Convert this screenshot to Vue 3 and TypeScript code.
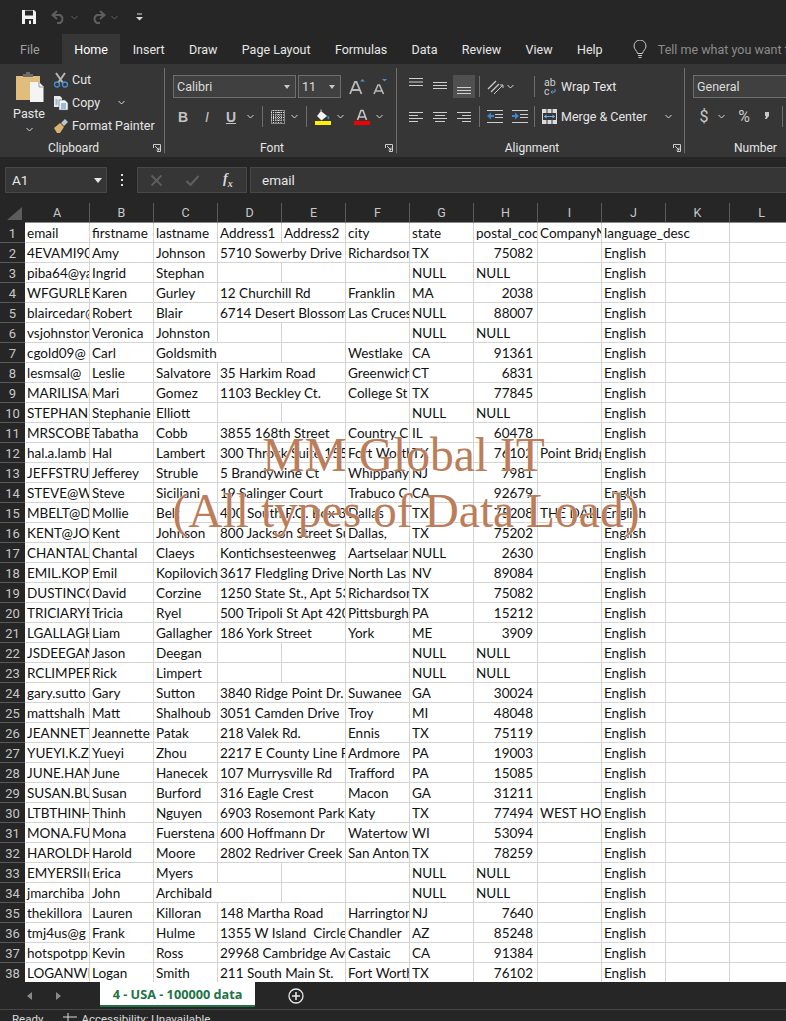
<script setup lang="ts">
// Excel dark ribbon with a worksheet of imported contacts

const tabs = ["File", "Home", "Insert", "Draw", "Page Layout", "Formulas", "Data", "Review", "View", "Help"];
const columns = ["A", "B", "C", "D", "E", "F", "G", "H", "I", "J", "K", "L"];

const raw = `email|firstname|lastname|Address1|Address2|city|state|postal_code|CompanyName|language_desc
4EVAMI90@|Amy|Johnson|5710 Sowerby Drive||Richardson|TX|75082||English
piba64@yahoo|Ingrid|Stephan||||NULL|NULL||English
WFGURLEY@|Karen|Gurley|12 Churchill Rd||Franklin|MA|2038||English
blaircedar@|Robert|Blair|6714 Desert Blossom||Las Cruces|NULL|88007||English
vsjohnston|Veronica|Johnston||||NULL|NULL||English
cgold09@|Carl|Goldsmith|||Westlake|CA|91361||English
lesmsal@|Leslie|Salvatore|35 Harkim Road||Greenwich|CT|6831||English
MARILISA@|Mari|Gomez|1103 Beckley Ct.||College St|TX|77845||English
STEPHANI|Stephanie|Elliott||||NULL|NULL||English
MRSCOBB|Tabatha|Cobb|3855 168th Street||Country C|IL|60478||English
hal.a.lamb|Hal|Lambert|300 Throck Suite 1551||Fort Worth|TX|76102|Point Bridge|English
JEFFSTRUBLE|Jefferey|Struble|5 Brandywine Ct||Whippany|NJ|7981||English
STEVE@W|Steve|Siciliani|19 Salinger Court||Trabuco C|CA|92679||English
MBELT@D|Mollie|Belt|400 South P.O. Box 3||Dallas|TX|75208|THE DALLAS|English
KENT@JO|Kent|Johnson|800 Jackson Street Su||Dallas,|TX|75202||English
CHANTAL.|Chantal|Claeys|Kontichsesteenweg||Aartselaar|NULL|2630||English
EMIL.KOPI|Emil|Kopilovich|3617 Fledgling Drive||North Las|NV|89084||English
DUSTINCO|David|Corzine|1250 State St., Apt 53||Richardson|TX|75082||English
TRICIARYE|Tricia|Ryel|500 Tripoli St Apt 420||Pittsburgh|PA|15212||English
LGALLAGH|Liam|Gallagher|186 York Street||York|ME|3909||English
JSDEEGAN|Jason|Deegan||||NULL|NULL||English
RCLIMPER|Rick|Limpert||||NULL|NULL||English
gary.sutto|Gary|Sutton|3840 Ridge Point Dr.||Suwanee|GA|30024||English
mattshalh|Matt|Shalhoub|3051 Camden Drive||Troy|MI|48048||English
JEANNETT|Jeannette|Patak|218 Valek Rd.||Ennis|TX|75119||English
YUEYI.K.ZH|Yueyi|Zhou|2217 E County Line R||Ardmore|PA|19003||English
JUNE.HAN|June|Hanecek|107 Murrysville Rd||Trafford|PA|15085||English
SUSAN.BU|Susan|Burford|316 Eagle Crest||Macon|GA|31211||English
LTBTHINH|Thinh|Nguyen|6903 Rosemont Park||Katy|TX|77494|WEST HOU|English
MONA.FU|Mona|Fuerstena|600 Hoffmann Dr||Watertow|WI|53094||English
HAROLDH|Harold|Moore|2802 Redriver Creek||San Anton|TX|78259||English
EMYERSII@|Erica|Myers||||NULL|NULL||English
jmarchiba|John|Archibald||||NULL|NULL||English
thekillora|Lauren|Killoran|148 Martha Road||Harrington|NJ|7640||English
tmj4us@g|Frank|Hulme|1355 W Island  Circle||Chandler|AZ|85248||English
hotspotpp|Kevin|Ross|29968 Cambridge Av||Castaic|CA|91384||English
LOGANWH|Logan|Smith|211 South Main St.||Fort Worth|TX|76102||English`;

interface Cell {
  text: string;
  span: number;
  isNumber: boolean;
}

// a long text runs over into an empty neighbour, like in a real sheet
function buildRow(line: string, rowIndex: number): Cell[] {
  const parts = line.split("|");
  while (parts.length < 12) parts.push("");
  const cells: Cell[] = [];
  for (let i = 0; i < 12; i++) {
    const text = parts[i];
    let span = 1;
    if (text && i < 11 && parts[i + 1] === "" && text.length > 8) span = 2;
    cells.push({ text, span, isNumber: rowIndex > 0 && /^\d+$/.test(text) });
    if (span === 2) i++;
  }
  return cells;
}

const rows = raw.split("\n").map(buildRow);
</script>

<template>
  <div class="excel">
    <div class="qat">
      <svg class="save" width="16" height="16" viewBox="0 0 16 16">
        <path d="M1 1h12l2 2v12H1z" fill="#f2f2f2" />
        <rect x="4" y="1.5" width="8" height="5" fill="#262626" />
        <rect x="4" y="10" width="8" height="5" fill="#262626" />
        <rect x="8" y="11.5" width="2" height="3.5" fill="#f2f2f2" />
      </svg>
      <svg class="qat-undo" width="15" height="14" viewBox="0 0 15 14">
        <path d="M6 1 1.500 5 6 9M2 5h7a4.500 4.500 0 0 1 0 8H6" fill="none" stroke="#5e5e5e" stroke-width="2" />
      </svg>
      <svg class="qat-chev" width="7" height="5" viewBox="0 0 7 5"><path d="M.5 1 3.500 4l3-3" fill="none" stroke="#5e5e5e" /></svg>
      <svg class="qat-redo" width="15" height="14" viewBox="0 0 15 14">
        <path d="M9 1l4.500 4L9 9M13 5H6a4.500 4.500 0 0 0 0 8h3" fill="none" stroke="#5e5e5e" stroke-width="2" />
      </svg>
      <svg class="qat-chev" width="7" height="5" viewBox="0 0 7 5"><path d="M.5 1 3.500 4l3-3" fill="none" stroke="#5e5e5e" /></svg>
      <svg class="qat-more" width="7" height="8" viewBox="0 0 7 8">
        <path d="M1 1h5" stroke="#dcdcdc" /><path d="M0 4h7L3.500 7.500z" fill="#dcdcdc" />
      </svg>
    </div>

    <div class="tabs">
      <div v-for="tab in tabs" :key="tab" class="tab" :class="{ active: tab === 'Home', file: tab === 'File' }">{{ tab }}</div>
      <svg class="bulb" width="14" height="19" viewBox="0 0 14 19">
        <path d="M4.500 13.500C4 10.500 1 9.500 1 6a6 6 0 0 1 12 0c0 3.500-3 4.500-3.500 7.500z" fill="none" stroke="#c8c8c8" />
        <path d="M5 15.500h4M5.500 17.500h3" stroke="#c8c8c8" />
      </svg>
      <span class="tell">Tell me what you want to do</span>
    </div>

    <div class="ribbon">
      <section class="group clipboard">
        <div class="group-body">
          <div class="paste">
            <svg width="31" height="31" viewBox="0 0 31 31">
              <path d="M2 4h24v24H2z" fill="#e0bd7c" />
              <path d="M9 4V2h3V0h4v2h3v3H9z" fill="#6b6b6b" />
              <path d="M16 10h9l4.500 4.500V30H16z" fill="#f4f4f4" />
              <path d="M25 10v5h4.500" fill="none" stroke="#9a9a9a" />
            </svg>
            <span class="paste-label">Paste</span>
            <svg class="chev" width="7" height="5" viewBox="0 0 7 5"><path d="M.5 1 3.500 4l3-3" fill="none" stroke="#d8d8d8" /></svg>
          </div>
          <div class="clip-list">
            <div class="clip-row">
              <svg width="16" height="16" viewBox="0 0 16 16">
                <path d="M3 1 10 11M12 1 5 11" stroke="#b8b8b8" stroke-width="2" />
                <circle cx="4" cy="12.500" r="2.500" fill="none" stroke="#4a90d0" stroke-width="1.300" />
                <circle cx="12" cy="12.500" r="2.500" fill="none" stroke="#4a90d0" stroke-width="1.300" />
              </svg>
              <span>Cut</span>
            </div>
            <div class="clip-row">
              <svg width="16" height="16" viewBox="0 0 16 16">
                <path d="M1 1h6l2 2v9H1z" fill="#e8e8e8" />
                <path d="M6 5h6l3 3v7H6z" fill="#f4f4f4" stroke="#5a5a5a" stroke-width=".6" />
                <path d="M8 9h5M8 11h5M8 13h5" stroke="#3f86c8" />
                <path d="M2.500 5h2M2.500 7h2M2.500 9h2" stroke="#3f86c8" />
              </svg>
              <span>Copy</span>
              <svg class="copy-chev" width="7" height="5" viewBox="0 0 7 5"><path d="M.5 1 3.500 4l3-3" fill="none" stroke="#d8d8d8" /></svg>
            </div>
            <div class="clip-row">
              <svg width="16" height="16" viewBox="0 0 16 16">
                <path d="M1 10 7 5l4 4-4 6H4z" fill="#d9b26f" />
                <path d="M8 5l4-4 3 3-4 4z" fill="#c4c4c4" />
              </svg>
              <span>Format Painter</span>
            </div>
          </div>
        </div>
        <div class="group-label">Clipboard
          <svg class="launcher" width="8" height="8" viewBox="0 0 8 8"><path d="M.5 4V.5H7.500V7.500H4M2 2l4 4M6 3.500V6H3.500" fill="none" stroke="#cfcfcf" /></svg>
        </div>
      </section>
      <div class="group-sep"></div>

      <section class="group font">
        <div class="group-body stack">
          <div class="tool-row">
            <div class="combo font-name"><span>Calibri</span><i class="caret"></i></div>
            <div class="combo font-size"><span>11</span><i class="caret"></i></div>
            <svg class="grow" width="17" height="18" viewBox="0 0 17 18">
              <path d="M1 16 6 4h1.500l5 12M3 12h7.500" fill="none" stroke="#b9b9b9" stroke-width="1.800" />
              <path d="M11 3.500 13.500 1 16 3.500z" fill="#4a90d0" />
            </svg>
            <svg class="shrink" width="15" height="18" viewBox="0 0 15 18">
              <path d="M1 16 5 7h1.500l4 9M3 13h6" fill="none" stroke="#b9b9b9" stroke-width="1.600" />
              <path d="M9 1h5l-2.500 2.500z" fill="#4a90d0" />
            </svg>
          </div>
          <div class="tool-row second">
            <b class="fmt bold">B</b>
            <i class="fmt italic">I</i>
            <u class="fmt under">U</u>
            <svg class="chev mini first" width="7" height="5" viewBox="0 0 7 5"><path d="M.5 1 3.500 4l3-3" fill="none" stroke="#d8d8d8" /></svg>
            <div class="tool-sep"></div>
            <svg width="14" height="14" viewBox="0 0 14 14" class="border-icon">
              <rect x=".5" y=".5" width="13" height="13" fill="none" stroke="#dcdcdc" stroke-dasharray="1 1" />
              <path d="M0 2.500h14M0 5h14M0 7.500h14M0 10h14M2.500 0v14M5 0v14M7.500 0v14M10 0v14" stroke="#dcdcdc" stroke-dasharray="1 1" />
            </svg>
            <svg class="chev mini" width="7" height="5" viewBox="0 0 7 5"><path d="M.5 1 3.500 4l3-3" fill="none" stroke="#d8d8d8" /></svg>
            <div class="tool-sep"></div>
            <svg width="16" height="16" viewBox="0 0 16 16" class="fill-icon">
              <path d="M6 2 12 7 6.500 11.500 2 7z" fill="#f2f2f2" />
              <path d="M6 2V.5" stroke="#cfcfcf" />
              <path d="M12.500 6.500a3 3 0 0 1 1.500 4l-1.500-1z" fill="#3f86c8" />
              <rect y="12" width="16" height="4" fill="#ffef00" />
            </svg>
            <svg class="chev mini" width="7" height="5" viewBox="0 0 7 5"><path d="M.5 1 3.500 4l3-3" fill="none" stroke="#d8d8d8" /></svg>
            <svg width="16" height="16" viewBox="0 0 16 16" class="color-icon">
              <path d="M3.500 11 7 1.500h2L12.500 11M5 8h6" fill="none" stroke="#c4c4c4" stroke-width="1.600" />
              <rect y="12" width="16" height="4" fill="#f00000" />
            </svg>
            <svg class="chev mini" width="7" height="5" viewBox="0 0 7 5"><path d="M.5 1 3.500 4l3-3" fill="none" stroke="#d8d8d8" /></svg>
          </div>
        </div>
        <div class="group-label">Font
          <svg class="launcher" width="8" height="8" viewBox="0 0 8 8"><path d="M.5 4V.5H7.500V7.500H4M2 2l4 4M6 3.500V6H3.500" fill="none" stroke="#cfcfcf" /></svg>
        </div>
      </section>
      <div class="group-sep"></div>

      <section class="group alignment">
        <div class="group-body stack">
          <div class="tool-row">
            <svg class="al" width="24" height="23" viewBox="0 0 24 23"><path d="M4 3.500h14M4 7h14M4 10.500h14" stroke="#cfcfcf" /></svg>
            <svg class="al" width="24" height="23" viewBox="0 0 24 23"><path d="M4 7.500h14M4 10.500h14M4 13.500h14" stroke="#cfcfcf" /></svg>
            <svg class="al on" width="22" height="23" viewBox="0 0 22 23"><path d="M4 12.500h14M4 15.500h14M4 18.500h14" stroke="#cfcfcf" /></svg>
            <div class="tool-sep short"></div>
            <svg class="orient" width="18" height="18" viewBox="0 0 18 18">
              <path d="M1 11 9 3M4 14l8-8" stroke="#c8c8c8" stroke-width="1.300" fill="none" />
              <path d="M7 16 16 7v3M16 7h-3" stroke="#c8c8c8" fill="none" />
            </svg>
            <svg class="chev orient-chev" width="7" height="5" viewBox="0 0 7 5"><path d="M.5 1 3.500 4l3-3" fill="none" stroke="#d8d8d8" /></svg>
            <div class="tool-sep wrap-sep"></div>
            <div class="wide-btn">
              <span class="abc">ab<br />c<svg width="6" height="6" viewBox="0 0 6 6"><path d="M5 0v3H1M2.500 1.500 1 3l1.500 1.500" fill="none" stroke="#5a9bd8" /></svg></span>
              <span>Wrap Text</span>
            </div>
          </div>
          <div class="tool-row second">
            <svg class="al" width="24" height="14" viewBox="0 0 24 14"><path d="M4 2.500h14M4 5.500h9M4 8.500h14M4 11.500h9" stroke="#cfcfcf" /></svg>
            <svg class="al" width="24" height="14" viewBox="0 0 24 14"><path d="M4 2.500h14M6 5.500h10M4 8.500h14M6 11.500h10" stroke="#cfcfcf" /></svg>
            <svg class="al" width="24" height="14" viewBox="0 0 24 14"><path d="M4 2.500h14M9 5.500h9M4 8.500h14M9 11.500h9" stroke="#cfcfcf" /></svg>
            <div class="tool-sep short row2"></div>
            <svg class="indent" width="17" height="14" viewBox="0 0 17 14">
              <path d="M0 .5h16M8 4.500h8M8 7.500h8M0 12.500h16" stroke="#cfcfcf" />
              <path d="M0 6l4-3.500v2.500h3v2H4v2.500z" fill="#3f86c8" />
            </svg>
            <svg class="indent second-indent" width="17" height="14" viewBox="0 0 17 14">
              <path d="M1 .5h16M9 4.500h8M9 7.500h8M1 12.500h16" stroke="#cfcfcf" />
              <path d="M8 6 4 2.500V5H1v2h3v2.500z" fill="#3f86c8" />
            </svg>
            <div class="tool-sep merge-sep"></div>
            <div class="wide-btn merge">
              <svg width="15" height="15" viewBox="0 0 15 15">
                <rect width="15" height="15" fill="#dcdcdc" />
                <rect x="1" y="4" width="13" height="7" fill="#363636" />
                <path d="M2 7.500h11" stroke="#6ab0ea" />
                <path d="M2 7.500 4.500 5.500v4zM13 7.500 10.500 5.500v4z" fill="#6ab0ea" />
                <path d="M5 0v4M10 0v4M5 11v4M10 11v4" stroke="#363636" />
              </svg>
              <span>Merge &amp; Center</span>
              <svg class="chev merge-chev" width="7" height="5" viewBox="0 0 7 5"><path d="M.5 1 3.500 4l3-3" fill="none" stroke="#d8d8d8" /></svg>
            </div>
          </div>
        </div>
        <div class="group-label">Alignment
          <svg class="launcher" width="8" height="8" viewBox="0 0 8 8"><path d="M.5 4V.5H7.500V7.500H4M2 2l4 4M6 3.500V6H3.500" fill="none" stroke="#cfcfcf" /></svg>
        </div>
      </section>
      <div class="group-sep"></div>

      <section class="group number">
        <div class="group-body stack">
          <div class="tool-row">
            <div class="combo general"><span>General</span></div>
          </div>
          <div class="tool-row second">
            <span class="num-sym dollar">$</span>
            <svg class="chev mini" width="7" height="5" viewBox="0 0 7 5"><path d="M.5 1 3.500 4l3-3" fill="none" stroke="#d8d8d8" /></svg>
            <span class="num-sym percent">%</span>
            <svg class="comma" width="10" height="10" viewBox="0 0 10 10"><path d="M3 1h4v4L4.500 8H3l1-3H3z" fill="#c8c8c8" /></svg>
            <div class="tool-sep comma-sep"></div>
          </div>
        </div>
        <div class="group-label number-label">Number</div>
      </section>
    </div>

    <div class="formula-bar">
      <div class="name-box"><span>A1</span><i class="caret white"></i></div>
      <div class="dots"><i></i><i></i><i></i></div>
      <div class="fx-box">
        <svg width="13" height="13" viewBox="0 0 13 13"><path d="M1.500 1.500l10 10M11.500 1.500l-10 10" stroke="#5e5e5e" stroke-width="1.800" /></svg>
        <svg width="15" height="13" viewBox="0 0 15 13"><path d="M1.500 7 5.500 11 13.500 2" fill="none" stroke="#5e5e5e" stroke-width="2.200" /></svg>
        <span class="fx">f<sub>x</sub></span>
      </div>
      <div class="formula-input">email</div>
    </div>

    <div class="sheet">
      <div class="col-head">
        <div class="corner"><svg width="16" height="15" viewBox="0 0 16 15"><path d="M16 0v13H1z" fill="#5c5c5c" /></svg></div>
        <div v-for="col in columns" :key="col" class="col-name">{{ col }}</div>
      </div>
      <div class="sheet-body">
        <div v-for="(row, r) in rows" :key="r" class="row">
          <div class="row-name">{{ r + 1 }}</div>
          <div
            v-for="(cell, c) in row"
            :key="c"
            class="cell"
            :class="{ num: cell.isNumber, two: cell.span === 2 }"
          ><span>{{ cell.text }}</span></div>
        </div>
        <div class="watermark">
          <div class="wm-top">MM Global IT</div>
          <div>(All types of Data Load)</div>
        </div>
      </div>
    </div>

    <div class="sheet-tabs">
      <svg class="nav" width="6" height="8" viewBox="0 0 6 8"><path d="M5 0v8L0 4z" fill="#8a8a8a" /></svg>
      <svg class="nav next" width="6" height="8" viewBox="0 0 6 8"><path d="M1 0v8l5-4z" fill="#8a8a8a" /></svg>
      <div class="sheet-tab">4 - USA - 100000 data</div>
      <svg class="add" width="16" height="16" viewBox="0 0 16 16">
        <circle cx="8" cy="8" r="7" fill="none" stroke="#e8e8e8" stroke-width="1.300" />
        <path d="M8 4v8M4 8h8" stroke="#e8e8e8" stroke-width="1.600" />
      </svg>
    </div>

    <div class="status">
      <span>Ready</span>
      <svg width="14" height="14" viewBox="0 0 14 14"><path d="M5 0v14M0 4h14" stroke="#dcdcdc" /></svg>
      <span>Accessibility: Unavailable</span>
    </div>
  </div>
</template>

<style scoped>
.excel {
  width: 786px;
  height: 1021px;
  overflow: hidden;
  background: #262626;
  color: #e6e6e6;
  font-family: Roboto, "Open Sans", sans-serif;
  font-size: 12.5px;
  display: flex;
  flex-direction: column;
}

/* title bar */
.qat {
  height: 34px;
  flex: none;
  display: flex;
  align-items: center;
  padding-left: 21px;
}
.qat svg {
  flex: none;
}
.qat-undo {
  margin-left: 14px;
}
.qat-redo {
  margin-left: 13px;
}
.qat-chev {
  margin-left: 5px;
}
.qat-more {
  margin-left: 18px;
}

.tabs {
  height: 30px;
  flex: none;
  display: flex;
  align-items: stretch;
  padding-left: 7.8px;
  white-space: nowrap;
}
.tab {
  padding: 0 12.2px;
  line-height: 31px;
  flex: none;
}
.tab.active {
  background: #363636;
  color: #fff;
  margin-left: 10px;
  padding: 0 12.5px;
}
.tab.file {
  color: #a0a0a0;
}
.bulb {
  flex: none;
  margin: 6px 0 5px 18px;
}
.tell {
  margin-left: 11px;
  line-height: 31px;
  color: #8c8c8c;
}

/* ribbon */
.ribbon {
  height: 93px;
  flex: none;
  display: flex;
  background: #363636;
  overflow: hidden;
}
.group {
  flex: none;
  display: flex;
  flex-direction: column;
  height: 93px;
}
.group-body {
  height: 77px;
  flex: none;
}
.group-body.stack {
  padding-top: 11px;
  box-sizing: border-box;
}
.group-label {
  position: relative;
  height: 16px;
  line-height: 14px;
  text-align: center;
  font-size: 12px;
  padding-right: 25px;
}
.launcher {
  position: absolute;
  right: 3px;
  top: 3px;
}
.group-sep {
  width: 1px;
  flex: none;
  margin: 4px 0;
  background: #6e6e6e;
}
.clipboard {
  width: 164px;
}
.clipboard .group-body {
  display: flex;
}
.clipboard .group-label {
  padding-right: 17px;
}
.paste {
  width: 50px;
  flex: none;
  display: flex;
  flex-direction: column;
  align-items: center;
  padding: 8px 0 0 8px;
  box-sizing: border-box;
}
.paste-label {
  margin-top: 3px;
  line-height: 16px;
}
.paste .chev {
  margin-top: 5px;
}
.clip-list {
  margin: 4px 0 0 3px;
}
.clip-row {
  height: 23px;
  display: flex;
  align-items: center;
  gap: 3px;
}
.copy-chev {
  margin-left: 15px;
}
.font {
  width: 231px;
  padding-left: 8px;
  box-sizing: border-box;
}
.tool-row {
  height: 23px;
  display: flex;
  align-items: center;
}
.tool-row svg {
  flex: none;
}
.tool-row.second {
  margin-top: 7px;
}
.combo {
  height: 23px;
  box-sizing: border-box;
  background: #404040;
  border: 1px solid #6e6e6e;
  display: flex;
  align-items: center;
  padding-left: 3px;
  color: #dcdcdc;
}
.caret {
  margin-left: auto;
  margin-right: 5px;
  border: 3.5px solid transparent;
  border-top: 4px solid #c8c8c8;
  border-bottom: 0;
}
.font-name {
  width: 123px;
}
.font-size {
  width: 43px;
  margin-left: 2px;
}
.grow {
  margin-left: 8px;
}
.shrink {
  margin-left: 7px;
}
.fmt {
  width: 24px;
  text-align: center;
  color: #c4c4c4;
  font-size: 14px;
  font-family: "Liberation Sans", sans-serif;
}
.fmt.bold {
  margin-left: -2px;
}
.fmt.under {
  font-weight: 700;
}
.chev.mini {
  margin-left: 6px;
}
.chev.mini.first {
  margin-left: 4px;
}
.tool-sep {
  width: 1px;
  height: 21px;
  background: #6e6e6e;
  margin: 0 8px;
  flex: none;
}
.color-icon {
  margin-left: 10px;
}
.alignment {
  width: 287px;
  padding-left: 8px;
  box-sizing: border-box;
}
.al.on {
  background: #505050;
  margin-right: 2px;
}
.tool-sep.short {
  margin: 0 7px 0 2px;
}
.orient-chev {
  margin-left: 2px;
}
.tool-sep.wrap-sep {
  margin: 0 9px 0 20px;
}
.wide-btn {
  display: flex;
  align-items: center;
  gap: 4px;
}
.abc {
  width: 12px;
  margin-right: 1px;
  font-size: 10.5px;
  line-height: 9px;
  color: #d0d0d0;
}
.second-indent {
  margin-left: 7px;
}
.tool-sep.merge-sep {
  margin: 0 7px 0 6px;
}
.merge-chev {
  margin-left: 14px;
}
.number {
  width: 110px;
  padding-left: 8px;
  box-sizing: border-box;
}
.general {
  width: 110px;
  flex: none;
}
.num-sym {
  color: #c8c8c8;
  font-size: 16px;
  text-align: center;
  flex: none;
}
.dollar {
  width: 16px;
  margin-left: 3px;
}
.percent {
  width: 22px;
  margin-left: 8px;
}
.comma {
  margin-left: 7px;
  margin-top: -2px;
}
.tool-sep.comma-sep {
  margin-left: 10px;
}
.number-label {
  text-align: left;
  padding: 0 0 0 41px;
}

/* formula bar */
.formula-bar {
  height: 46px;
  flex: none;
  box-sizing: border-box;
  padding: 10px 0 10px 5px;
  display: flex;
  align-items: stretch;
}
.name-box {
  width: 102px;
  box-sizing: border-box;
  background: #363636;
  border: 1px solid #474747;
  display: flex;
  align-items: center;
  padding-left: 6px;
  font-size: 13.5px;
}
.caret.white {
  border-left-width: 4px;
  border-right-width: 4px;
  border-top: 5px solid #e6e6e6;
  margin-right: 4px;
}
.dots {
  width: 30px;
  flex: none;
  display: flex;
  flex-direction: column;
  align-items: center;
  justify-content: center;
  gap: 3px;
}
.dots i {
  width: 2px;
  height: 2px;
  background: #e0e0e0;
}
.fx-box {
  width: 110px;
  box-sizing: border-box;
  background: #363636;
  border: 1px solid #474747;
  display: flex;
  align-items: center;
  padding-left: 12px;
  gap: 22px;
}
.fx {
  font-family: "Liberation Serif", serif;
  font-style: italic;
  font-weight: 700;
  font-size: 14px;
  color: #d8d8d8;
  margin-left: 1px;
}
.fx sub {
  font-size: 10px;
}
.formula-input {
  flex: 1;
  margin-left: 3px;
  background: #363636;
  border: 1px solid #474747;
  border-right: 0;
  padding-left: 11px;
  line-height: 24px;
  font-size: 13.5px;
}

/* worksheet */
.sheet {
  height: 779px;
  flex: none;
  overflow: hidden;
}
.col-head {
  height: 20px;
  display: grid;
  grid-template-columns: 25px 65px repeat(11, 64px);
  color: #c8c8c8;
  font-size: 12.5px;
  line-height: 19px;
  text-align: center;
}
.corner {
  display: flex;
  justify-content: flex-end;
  align-items: flex-end;
  padding: 0 3px 1px 0;
  box-sizing: border-box;
}
.col-name {
  border-right: 1px solid #5a5a5a;
  border-bottom: 1px solid #8a8a8a;
}
.sheet-body {
  position: relative;
  width: 810px;
}
.row {
  height: 20px;
  display: grid;
  grid-template-columns: 25px 65px repeat(11, 64px);
}
.row-name {
  background: #262626;
  color: #c8c8c8;
  font-size: 13px;
  text-align: center;
  line-height: 21px;
  height: 19px;
  border-bottom: 1px solid #5a5a5a;
}
.cell {
  background: #fff;
  color: #111;
  border-right: 1px solid #d4d4d4;
  border-bottom: 1px solid #d4d4d4;
  overflow: hidden;
  white-space: pre;
  font-family: "Lato", "Noto Sans", sans-serif;
  font-size: 13.5px;
  line-height: 21px;
  padding-left: 2px;
  padding-right: 1px;
}
.cell.num {
  text-align: right;
  padding-right: 4px;
}
.cell.two {
  grid-column: span 2;
}
.watermark {
  position: absolute;
  left: 0;
  width: 812px;
  top: 204px;
  font-family: "Liberation Serif", serif;
  font-size: 47.5px;
  line-height: 56px;
  color: #bb7d5a;
  text-align: center;
  white-space: pre;
  text-shadow: 0 0 1px #fff, 0 0 1px #fff;
}
.wm-top {
  padding-right: 5px;
}

/* bottom */
.sheet-tabs {
  height: 28px;
  flex: none;
  display: flex;
  align-items: flex-start;
  border-bottom: 1px solid #474747;
  box-sizing: border-box;
  padding-left: 27px;
}
.nav {
  margin-top: 10px;
}
.nav.next {
  margin-left: 22px;
}
.sheet-tab {
  margin-left: 39px;
  width: 155px;
  height: 25px;
  box-sizing: border-box;
  background: #fff;
  border-bottom: 2px solid #217346;
  color: #217346;
  font-family: "Open Sans", sans-serif;
  font-weight: 700;
  font-size: 12.7px;
  line-height: 24px;
  text-align: center;
}
.add {
  margin: 6px 0 0 33px;
}
.status {
  display: flex;
  align-items: flex-start;
  padding: 2px 0 0 12px;
  gap: 4px;
  color: #dcdcdc;
  font-size: 11.5px;
  white-space: nowrap;
}
.status svg {
  margin: 1px 0 0 16px;
}
</style>

<style>
html,
body {
  margin: 0;
  background: #262626;
}
</style>
